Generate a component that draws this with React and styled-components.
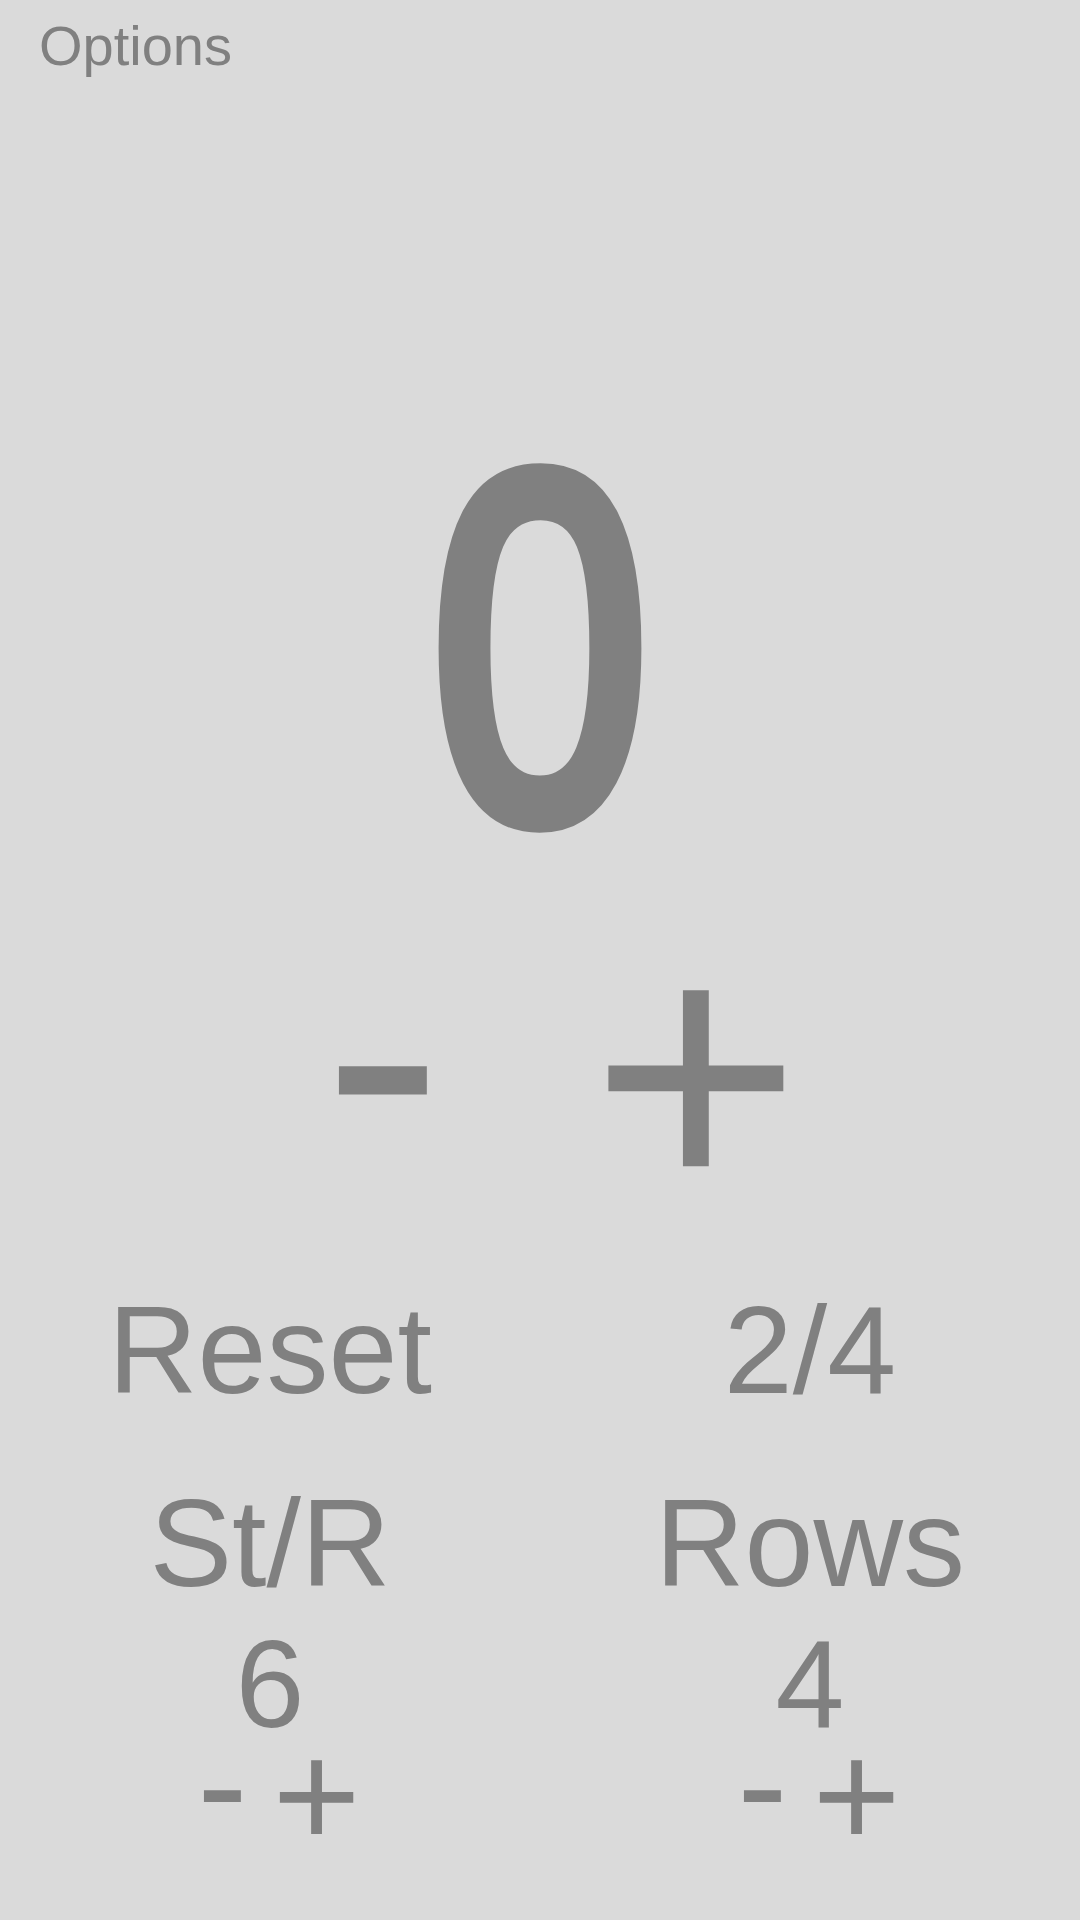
import React from 'react';
import styled, { createGlobalStyle } from 'styled-components';

const GlobalStyle = createGlobalStyle`
    html, body {
        margin : 0;
        padding : 0;
        background : #dadada;
    }
    body {
        font-family : 'Liberation Sans', Arial, sans-serif;
        color : #808080;
    }
`;

const Page = styled.div`
    width : 1080px;
    height : 1920px;
    display : flex;
    flex-direction : column;
    overflow : hidden;
`;

const Header = styled.div`
    padding : 18px 0 0 39px;
    font-size : 56px;
    line-height : 56px;
`;

// the counter font in the original is a heavy, squarish face: thicken and narrow Arial
const Count = styled.div`
    margin-top : 328px;
    font-size : 491px;
    line-height : 491px;
    text-align : center;
    -webkit-text-stroke : 22px currentColor;
    transform : scaleX(0.79);
`;

const Controls = styled.div`
    display : flex;
    justify-content : center;
    align-items : flex-start;
    margin-top : ${props => props.$top}px;
    padding-left : ${props => props.$shift}px;
    gap : ${props => props.$gap}px;
`;

const Btn = styled.button`
    border : none;
    background : none;
    padding : 0;
    color : inherit;
    font-family : inherit;
    font-size : ${props => props.$size}px;
    line-height : ${props => props.$line}px;
    margin-top : ${props => -(props.$raise || 0)}px;
    cursor : pointer;
`;

const Grid = styled.div`
    display : grid;
    grid-template-columns : 1fr 1fr;
    margin-top : 35px;
`;

const Cell = styled.div`
    font-size : 124px;
    line-height : 124px;
    text-align : center;
    cursor : pointer;
`;

const Setting = styled.div`
    display : flex;
    flex-direction : column;
    align-items : center;
    margin-top : 69px;
`;

const Label = styled.div`
    font-size : 124px;
    line-height : 124px;
`;

const Value = styled.div`
    margin-top : 29px;
    font-size : 124px;
    line-height : 100px;
`;

const Stepper = ({ onMinus, onPlus }) => (
    <Controls $top={1} $shift={18} $gap={25}>
        <Btn $size={151} $line={120} $raise={11} onClick={onMinus}>-</Btn>
        <Btn $size={151} $line={120} onClick={onPlus}>+</Btn>
    </Controls>
);

export default function App() {
    const [count, setCount] = React.useState(0);
    const [stitches, setStitches] = React.useState(6);
    const [rows, setRows] = React.useState(4);

    return (
        <>
            <GlobalStyle />
            <Page>
                <Header>Options</Header>
                <Count>{count}</Count>
                <Controls $top={0} $shift={44} $gap={148}>
                    <Btn $size={360} $line={360} $raise={22} onClick={() => setCount(c => Math.max(0, c - 1))}>-</Btn>
                    <Btn $size={360} $line={360} onClick={() => setCount(c => c + 1)}>+</Btn>
                </Controls>
                <Grid>
                    <Cell onClick={() => setCount(0)}>Reset</Cell>
                    <Cell>2/4</Cell>
                    <Setting>
                        <Label>St/R</Label>
                        <Value>{stitches}</Value>
                        <Stepper onMinus={() => setStitches(s => Math.max(1, s - 1))} onPlus={() => setStitches(s => s + 1)} />
                    </Setting>
                    <Setting>
                        <Label>Rows</Label>
                        <Value>{rows}</Value>
                        <Stepper onMinus={() => setRows(r => Math.max(1, r - 1))} onPlus={() => setRows(r => r + 1)} />
                    </Setting>
                </Grid>
            </Page>
        </>
    );
}
